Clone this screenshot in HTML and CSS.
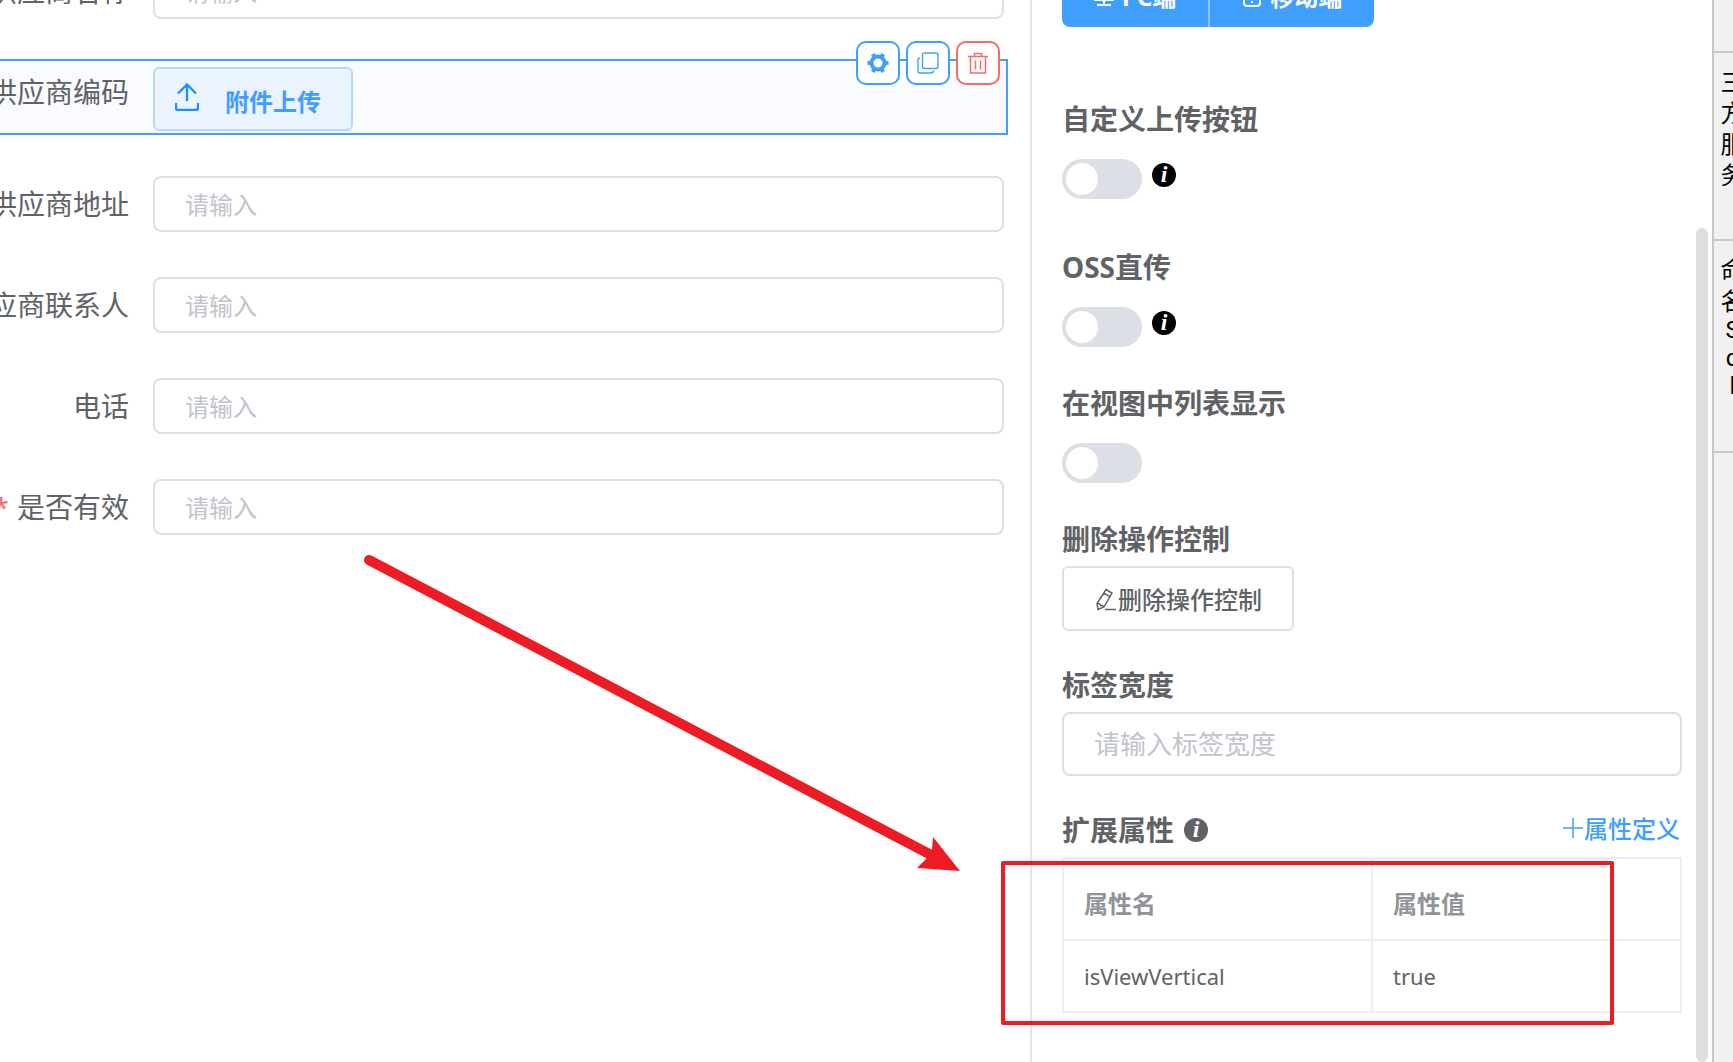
FILE: index.html
```
<!DOCTYPE html>
<html lang="zh-CN">
<head>
    <meta charset="UTF-8">
    <meta name="viewport" content="width=device-width, initial-scale=1.0">
    <title>表单设计</title>
    <link rel="stylesheet" href="styles.css">
</head>
<body>
    <div class="designer">
        <main class="canvas">
            <form class="form">
                <div class="row">
                    <label for="supplier_name">供应商名称</label>
                    <input type="text" id="supplier_name" placeholder="请输入">
                </div>

                <!-- selected widget -->
                <div class="row selected">
                    <label for="supplier_code">供应商编码</label>
                    <button type="button" id="supplier_code" class="upload">
                        <svg width="24" height="28" viewBox="0 0 24 28" fill="none" stroke="#1890ff" stroke-width="2.300">
                            <path d="M12 18V2M3 10.500L12 1.500L21 10.500M1 20V25Q1 27 3 27H21Q23 27 23 25V20"/>
                        </svg>
                        <span>附件上传</span>
                    </button>
                    <div class="tools">
                        <button type="button" class="tool" aria-label="设置">
                            <svg width="22" height="22" viewBox="0 0 22 22">
                                <circle cx="11" cy="11" r="6.500" fill="none" stroke="#409eff" stroke-width="4"/>
                                <path d="M0.500 11H4M18 11H21.500M5.800 2L7.500 5M14.500 17L16.200 20M16.200 2L14.500 5M7.500 17L5.800 20" stroke="#409eff" stroke-width="4"/>
                            </svg>
                        </button>
                        <button type="button" class="tool" aria-label="复制">
                            <svg width="22" height="22" viewBox="0 0 22 22" fill="none" stroke="#409eff" stroke-width="1.400">
                                <rect x="5.500" y="1" width="15.500" height="15.500" rx="2"/>
                                <path d="M3 6Q1 6 1 8V19Q1 21 3 21H14Q16.500 21 16.500 18.500"/>
                            </svg>
                        </button>
                        <button type="button" class="tool danger" aria-label="删除">
                            <svg width="22" height="22" viewBox="0 0 22 22" fill="none" stroke="#f56c6c" stroke-width="1.500">
                                <path d="M1 4.500H21M3.500 4.500V21H18.500V4.500M7.500 4V1.500H14.500V4M8.500 8.500V17.500M13.500 8.500V17.500"/>
                            </svg>
                        </button>
                    </div>
                </div>

                <div class="row">
                    <label for="supplier_address">供应商地址</label>
                    <input type="text" id="supplier_address" placeholder="请输入">
                </div>
                <div class="row">
                    <label for="supplier_contact">供应商联系人</label>
                    <input type="text" id="supplier_contact" placeholder="请输入">
                </div>
                <div class="row">
                    <label for="phone">电话</label>
                    <input type="text" id="phone" placeholder="请输入">
                </div>
                <div class="row">
                    <label for="is_valid" class="required">是否有效</label>
                    <input type="text" id="is_valid" placeholder="请输入">
                </div>
            </form>
        </main>

        <aside class="panel">
            <div class="segment">
                <button type="button">
                    <svg width="24" height="24" viewBox="0 0 24 24" fill="none" stroke="#fff" stroke-width="2">
                        <path d="M3 3H21V17H3ZM12 17V22M5 22H19"/>
                    </svg>
                    PC端
                </button>
                <button type="button">
                    <svg width="24" height="24" viewBox="0 0 24 24" fill="none" stroke="#fff" stroke-width="2">
                        <rect x="4" y="2" width="16" height="21" rx="3"/>
                        <path d="M4 15H20M11 19H13"/>
                    </svg>
                    移动端
                </button>
            </div>

            <div class="field switch-field first">
                <label for="custom_button">自定义上传按钮</label>
                <div class="switch-line">
                    <input type="checkbox" class="switch" id="custom_button">
                    <i class="info">i</i>
                </div>
            </div>
            <div class="field switch-field">
                <label for="oss_upload">OSS直传</label>
                <div class="switch-line">
                    <input type="checkbox" class="switch" id="oss_upload">
                    <i class="info">i</i>
                </div>
            </div>
            <div class="field switch-field">
                <label for="show_in_list">在视图中列表显示</label>
                <div class="switch-line">
                    <input type="checkbox" class="switch" id="show_in_list">
                </div>
            </div>
            <div class="field">
                <label for="delete_control">删除操作控制</label>
                <button type="button" id="delete_control" class="plain">
                    <svg width="24" height="24" viewBox="0 0 24 24" fill="none" stroke="#606266" stroke-width="1.500">
                        <path d="M12 2.500L18 6L10 20L4 22.500L3 16.500ZM9.800 6.200L15.800 9.700M3 16.500Q6 16 6.500 18.500Q9 18 10 20M11 22.500H22"/>
                    </svg>
                    删除操作控制
                </button>
            </div>
            <div class="field">
                <label for="label_width">标签宽度</label>
                <input type="text" id="label_width" placeholder="请输入标签宽度">
            </div>

            <!-- extended attributes -->
            <div class="field">
                <div class="field-head">
                    <h3>扩展属性</h3>
                    <i class="info grey">i</i>
                    <a href="#" class="add">
                        <svg width="22" height="22" viewBox="0 0 22 22" stroke="#409eff" stroke-width="1.500">
                            <path d="M1 11H21M11 1V21"/>
                        </svg>
                        属性定义
                    </a>
                </div>
                <table>
                    <thead>
                        <tr><th>属性名</th><th>属性值</th></tr>
                    </thead>
                    <tbody>
                        <tr><td>isViewVertical</td><td>true</td></tr>
                    </tbody>
                </table>
            </div>
            <div class="thumb"></div>
        </aside>

        <nav class="side">
            <div class="side-item"></div>
            <div class="side-item third">三方服务</div>
            <div class="side-item naming">命名<span>S</span><span>q</span><span>l</span></div>
        </nav>

        <!-- annotation over the designer -->
        <svg class="arrow" width="600" height="320" viewBox="0 0 600 320">
            <path d="M6 6L570 302" stroke="#ed1c24" stroke-width="10" stroke-linecap="round"/>
            <path d="M597 317L570 283L569 296L563 305L554 314Z" fill="#ed1c24"/>
        </svg>
        <div class="highlight"></div>
    </div>
</body>
</html>
```
FILE: styles.css
```
* {
    box-sizing: border-box;
}
body {
    margin: 0;
    font-family: "Noto Sans", "Noto Sans CJK SC", sans-serif;
    font-size: 24px;
    color: #606266;
    background: #fff;
}
button, input {
    font-family: inherit;
    font-size: 24px;
    margin: 0;
}
button {
    cursor: pointer;
}
svg {
    flex: none;
}
.designer {
    position: relative;
    display: flex;
    height: 100vh;
    overflow: hidden;
}

/* form canvas, scrolled a little */
.canvas {
    flex: 1;
    min-width: 0;
}
.form {
    margin-top: -37px;
    padding-right: 26px;
}
.row {
    display: flex;
    align-items: flex-start;
    margin-bottom: 45px;
}
.row label {
    display: flex;
    justify-content: flex-end;
    width: 129px;
    margin-right: 24px;
    flex: none;
    font-size: 28px;
    line-height: 56px;
    white-space: nowrap;
}
.required::before {
    content: "*";
    color: #f56c6c;
    margin-right: 8px;
}
input[type="text"] {
    height: 56px;
    padding: 0 30px;
    border: 2px solid #dcdfe6;
    border-radius: 8px;
    color: #606266;
    background: #fff;
    outline: none;
}
.row input[type="text"] {
    flex: 1;
    min-width: 0;
}
input::placeholder {
    color: #c0c4cc;
    opacity: 1;
}
.selected {
    position: relative;
    margin: -5px -4px 41px 0;
    padding: 3px 0 2px;
    border: 2px solid #409eff;
    border-left: none;
    background: #f9fbff;
}
.upload {
    display: flex;
    align-items: center;
    width: 200px;
    height: 64px;
    margin-top: 3px;
    padding: 0 20px;
    border: 2px solid #b3d8ff;
    border-radius: 6px;
    background: #ebf3ff;
    color: #409eff;
    font-weight: bold;
}
.upload svg {
    margin-bottom: 4px;
}
.upload span {
    margin-left: 26px;
    padding-top: 2px;
}
.tools {
    position: absolute;
    top: -20px;
    right: 6px;
    display: flex;
    gap: 6px;
}
.tool {
    display: flex;
    align-items: center;
    justify-content: center;
    width: 44px;
    height: 44px;
    padding: 0;
    border: 2px solid #409eff;
    border-radius: 10px;
    background: #fff;
}
.tool.danger {
    border-color: #f56c6c;
}

/* property panel */
.panel {
    position: relative;
    width: 682px;
    flex: none;
    padding: 0 30px;
    border-left: 2px solid #e4e4e4;
}
.segment {
    display: flex;
    margin-top: -37px;
    margin-bottom: 72px;
}
.segment button {
    display: flex;
    align-items: center;
    gap: 6px;
    height: 64px;
    padding: 0 32px 0 30px;
    border: none;
    background: #409eff;
    color: #fff;
    font-weight: bold;
}
.segment button:first-child {
    border-radius: 8px 0 0 8px;
}
.segment button:last-child {
    border-left: 2px solid #8cc5ff;
    border-radius: 0 8px 8px 0;
}
.field {
    margin-bottom: 34px;
}
.field label, .field h3 {
    display: block;
    margin: 0 0 7px;
    font-size: 28px;
    font-weight: bold;
    line-height: 40px;
}
.switch-field {
    margin-bottom: 36px;
}
.switch-field.first {
    margin-bottom: 48px;
}
.switch-field label {
    margin-bottom: 20px;
}
.switch-line {
    display: flex;
    gap: 10px;
    height: 40px;
}
.switch {
    appearance: none;
    width: 80px;
    height: 40px;
    padding: 4px;
    border-radius: 20px;
    background: #dcdfe6;
}
.switch::before {
    content: "";
    display: block;
    width: 32px;
    height: 32px;
    border-radius: 50%;
    background: #fff;
}
.switch:checked {
    background: #409eff;
}
.switch:checked::before {
    margin-left: 40px;
}
.info {
    width: 24px;
    height: 24px;
    margin-top: 4px;
    border-radius: 50%;
    background: #000;
    color: #fff;
    font: italic bold 24px/23px "Liberation Serif", serif;
    text-align: center;
}
.info.grey {
    margin: 0 0 8px 10px;
    background: #606266;
}
.plain {
    display: flex;
    align-items: center;
    height: 65px;
    padding: 0 30px;
    border: 2px solid #dcdfe6;
    border-radius: 6px;
    background: #fff;
    color: #606266;
    font-weight: 500;
}
.field input[type="text"] {
    width: 100%;
    height: 64px;
    font-size: 26px;
}
.field-head {
    display: flex;
    align-items: center;
}
.add {
    display: flex;
    align-items: center;
    margin: 0 2px 12px auto;
    color: #409eff;
    font-weight: 500;
    text-decoration: none;
}
table {
    width: 100%;
    table-layout: fixed;
    border-collapse: collapse;
}
th, td {
    height: 72px;
    padding: 0 20px;
    border: 2px solid #ebeef5;
    text-align: left;
    font-size: 22px;
    font-weight: normal;
}
th {
    height: 82px;
    padding-top: 6px;
    color: #909399;
    font-size: 24px;
    font-weight: bold;
}
.thumb {
    position: absolute;
    top: 228px;
    right: 4px;
    bottom: 0;
    width: 12px;
    border-radius: 6px;
    background: #dddee0;
}

/* tab strip, runs off the right edge */
.side {
    width: 40px;
    flex: none;
    margin-right: -19px;
    border-left: 2px solid #c8c8c8;
    background: #f1f1f1;
    color: #000;
    line-height: 31px;
    text-align: center;
}
.side-item {
    height: 53px;
    padding: 13px 7px 0 6px;
    border-bottom: 2px solid #c8c8c8;
}
.third {
    height: 188px;
}
.naming {
    height: 212px;
}
.side-item span {
    display: block;
    font-family: Roboto, sans-serif;
    line-height: 28px;
}

.arrow {
    position: absolute;
    left: 363px;
    top: 554px;
}
.highlight {
    position: absolute;
    top: 861px;
    right: 119px;
    width: 613px;
    height: 164px;
    border: 4px solid #ed1c24;
    border-radius: 2px;
    pointer-events: none;
}
```
